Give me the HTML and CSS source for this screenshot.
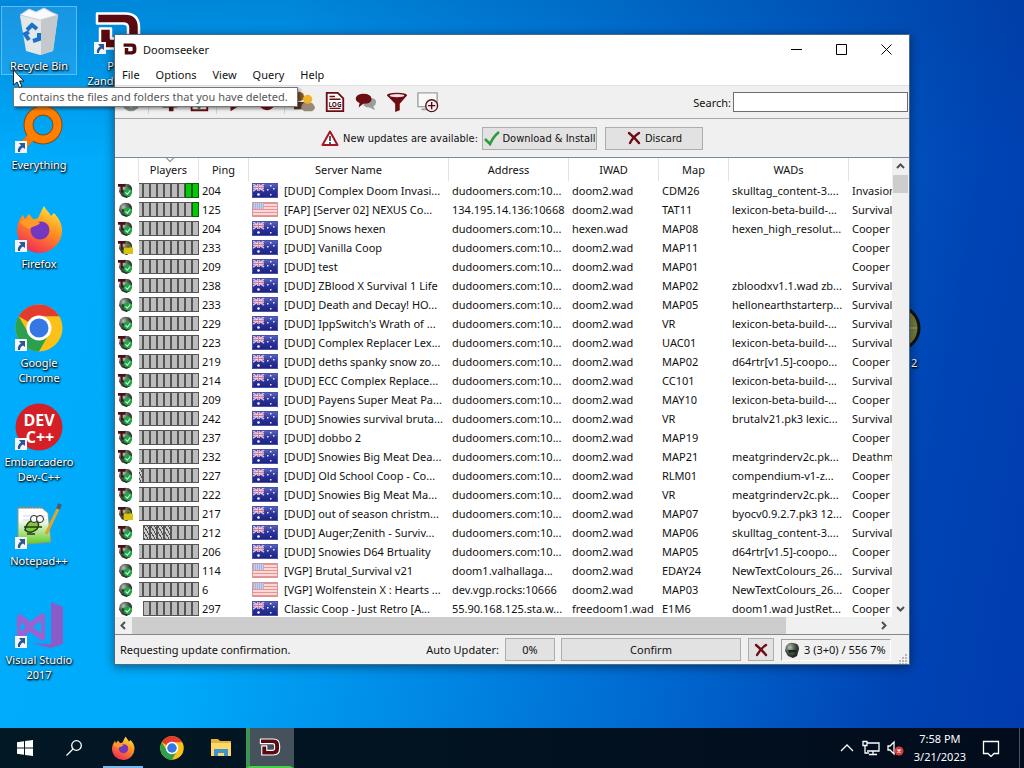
FILE: index.html
```html
<!DOCTYPE html>
<html lang="en">
<head>
    <meta charset="utf-8">
    <title>Doomseeker</title>
    <link rel="stylesheet" href="styles.css">
    <script src="servers.js" defer></script>
</head>

<body>

<!-- shared icons -->
<svg class="sprite" aria-hidden="true">
    <defs>
        <linearGradient id="fox" x1="0.8" y1="0" x2="0.3" y2="1">
            <stop offset="0" stop-color="#ffe83c"/><stop offset="0.45" stop-color="#ff9020"/><stop offset="1" stop-color="#f0285a"/>
        </linearGradient>
        <linearGradient id="note" x1="0" y1="0" x2="0" y2="1">
            <stop offset="0.3" stop-color="#fff"/><stop offset="1" stop-color="#5cc81c"/>
        </linearGradient>
        <linearGradient id="navy" x1="0" y1="0" x2="0" y2="1">
            <stop offset="0" stop-color="#5c68c0"/><stop offset="0.5" stop-color="#2c3498"/><stop offset="1" stop-color="#1c2080"/>
        </linearGradient>
        <radialGradient id="metal" cx="0.35" cy="0.3" r="0.8">
            <stop offset="0" stop-color="#b8c0b8"/><stop offset="0.45" stop-color="#4c564c"/><stop offset="1" stop-color="#101410"/>
        </radialGradient>
    </defs>
    <symbol id="d-logo" viewBox="0 0 48 41">
        <path d="M3 3H31Q45 3 45 17V24Q45 38 31 38H6V18H17V28H29Q34 28 34 24V17Q34 13 29 13H3z" fill="#5a0a10" stroke="#fff" stroke-width="2.500" stroke-linejoin="round"/>
    </symbol>
    <symbol id="d-logo-plain" viewBox="0 0 48 41">
        <path d="M2 2H31Q46 2 46 17V24Q46 39 31 39H6V17H18V28H29Q33 28 33 24V17Q33 13 29 13H2z" fill="#4c0a10"/>
    </symbol>
    <symbol id="chrome" viewBox="0 0 48 48">
        <circle cx="24" cy="24" r="23.500" fill="#fbc116"/>
        <path d="M24 24L3.600 12.300A23.500 23.500 0 0 1 44.400 12.300H24z" fill="#e33b2e"/>
        <path d="M3.600 12.300A23.500 23.500 0 0 0 24 47.500L34 30 24 24 14 30z" fill="#2da04e"/>
        <circle cx="24" cy="24" r="12.500" fill="#fff"/>
        <circle cx="24" cy="24" r="9.500" fill="#3578e5"/>
    </symbol>
    <symbol id="firefox" viewBox="0 0 48 48">
        <path d="M29 1c2 4 5 6 7 10l3-3c5 5 8 11 8 17a22.500 22.500 0 0 1-45 1C2 20 4 14 8 10l2 4 4-5 4 5c3 0 5 0 6-3 2-4 3-7 5-10z" fill="url(#fox)"/>
        <path d="M16 22c4-6 12-8 17-2 3 5 1 12-5 14-8 2-14-4-12-12z" fill="#7438c0"/>
        <path d="M5 17c6-4 12-4 16-1l4 2c-2 3-7 3-9 5-3 2-7-2-11-6z" fill="#ff9a28"/>
    </symbol>
    <symbol id="shortcut" viewBox="0 0 12 12">
        <path d="M0 0h12v12H0z" fill="#f4f6fa"/>
        <path d="M4 2h6v6L8 6.500Q5 8 5 11H3Q2 7 6 4.500z" fill="#2b5797"/>
    </symbol>
    <symbol id="helmet" viewBox="0 0 16 16">
        <path d="M2 4Q5 0 9 1q6 0 6 6l-2 7-4 2-5-2L1 9z" fill="url(#metal)"/>
        <path d="M4 8h9l-1 3-3-1-4 1z" fill="#1a261c"/>
    </symbol>
    <symbol id="ok" viewBox="0 0 16 16">
        <circle cx="10.500" cy="10" r="4.500" fill="#24a34a"/>
        <path d="M8 10l2 2 3-4" stroke="#c8ffd0" stroke-width="1.200" fill="none"/>
    </symbol>
    <symbol id="tmark" viewBox="0 0 16 16">
        <path d="M0 1h8v3H5v6H3V4H0z" fill="#4a1014"/>
    </symbol>
    <symbol id="lock" viewBox="0 0 16 16">
        <path d="M8 9V7q2.500-4 5 0v2" stroke="#8c7a10" stroke-width="1.500" fill="none"/>
        <path d="M6 8h10v7H6z" fill="#d8c410"/>
    </symbol>
    <symbol id="flag-au" viewBox="0 0 26 15">
        <path d="M0 0h26v15H0z" fill="url(#navy)"/>
        <path d="M1 1l11 7M12 1L1 8" stroke="#d8c0e4" stroke-width="1.500"/>
        <path d="M6.500 1v7M1 4.500h11" stroke="#f0d8ec" stroke-width="2.500"/>
        <path d="M6.500 1v7M1 4.500h11" stroke="#e07888" stroke-width="1"/>
        <circle cx="6.500" cy="11.500" r="1.300" fill="#fff"/>
        <path d="M18 2h1.500v1.500H18zM15 6h1.500v1.500H15zM21 5h1.500v1.500H21zM18 11h1.500v1.500H18z" fill="#e8ecff"/>
        <path d="M.5.5h25v14H.5z" fill="none" stroke="#4a52a8"/>
    </symbol>
    <symbol id="flag-us" viewBox="0 0 26 15">
        <path d="M0 0h26v15H0z" fill="#fdf0f0"/>
        <path d="M0 1.500h26M0 4.500h26M0 7.500h26M0 10.500h26M0 13.500h26" stroke="#f09090" stroke-width="1.300"/>
        <path d="M1 1h11v6H1z" fill="#a8b4e0"/>
        <path d="M2 2h9M2 4h9M2 6h9" stroke="#e4eaff" stroke-dasharray="1 1"/>
        <path d="M.5.5h25v14H.5z" fill="none" stroke="#d09898"/>
    </symbol>
    <symbol id="cross" viewBox="0 0 16 16">
        <path d="M3 3q6 5 10 10M13 3Q7 7 4 13" stroke="#6e0c14" stroke-width="2.400" fill="none" stroke-linecap="round"/>
    </symbol>
</svg>

<main class="desktop">
    <div class="icons">
        <a class="icon selected" href="#">
            <svg class="icon-pic" viewBox="0 0 48 48">
                <path d="M5 9l38-1-5 36-13 4-14-4z" fill="#e3e7ea"/>
                <path d="M26 11l17-3-5 36-12 4z" fill="#c2c8cc"/>
                <path d="M5 8l9-6 7 3 8-4 7 4 7 3-18 5z" fill="#f8fafb" stroke="#c9d0d4"/>
                <path d="M12 23l5-5 5 4M24 26v6l-6 2M14 33l-4-6 4-2" fill="none" stroke="#1a72c8" stroke-width="4"/>
            </svg>
            <span class="icon-label">Recycle Bin</span>
        </a>
        <a class="icon" href="#">
            <svg class="icon-pic" viewBox="0 0 48 48">
                <circle cx="28" cy="19" r="14.500" fill="none" stroke="#8a4b10" stroke-width="10"/>
                <path d="M17 30L4 44" stroke="#f57c00" stroke-width="8"/>
                <circle cx="28" cy="19" r="14.500" fill="none" stroke="#ff8000" stroke-width="8"/>
            </svg>
            <svg class="shortcut"><use href="#shortcut"/></svg>
            <span class="icon-label">Everything</span>
        </a>
        <a class="icon" href="#">
            <svg class="icon-pic"><use href="#firefox"/></svg>
            <svg class="shortcut"><use href="#shortcut"/></svg>
            <span class="icon-label">Firefox</span>
        </a>
        <a class="icon" href="#">
            <svg class="icon-pic"><use href="#chrome"/></svg>
            <svg class="shortcut"><use href="#shortcut"/></svg>
            <span class="icon-label">Google Chrome</span>
        </a>
        <a class="icon" href="#">
            <svg class="icon-pic" viewBox="0 0 48 48">
                <circle cx="24" cy="24" r="23.500" fill="#d51f26"/>
                <text class="dev-text" x="24" y="23" text-anchor="middle">DEV</text>
                <text class="dev-text" x="25" y="40" text-anchor="middle">C++</text>
            </svg>
            <svg class="shortcut"><use href="#shortcut"/></svg>
            <span class="icon-label">Embarcadero Dev-C++</span>
        </a>
        <a class="icon" href="#">
            <svg class="icon-pic" viewBox="0 0 48 48">
                <path d="M3 6h24l6 5 3 29-33 3z" fill="url(#note)" stroke="#8a9a80"/>
                <path d="M4 5h22" stroke="#888" stroke-width="3" stroke-dasharray="1 2"/>
                <path d="M8 14h22M8 18h24" stroke="#c8d8e8"/>
                <path d="M10 28q2-10 10-10 6 3 2 9-7 6-12 1zM9 25h18M12 32h8" fill="#7cc840" stroke="#243c10" stroke-width="1.500"/>
                <circle cx="19" cy="17" r="3.500" fill="#fff" stroke="#222"/>
                <circle cx="25" cy="17" r="3.500" fill="#fff" stroke="#222"/>
                <path d="M31 32L44 5" stroke="#e2a52c" stroke-width="3"/>
                <path d="M43 7l2-5" stroke="#50586c" stroke-width="4"/>
            </svg>
            <svg class="shortcut"><use href="#shortcut"/></svg>
            <span class="icon-label">Notepad++</span>
        </a>
        <a class="icon" href="#">
            <svg class="icon-pic" viewBox="0 0 48 48">
                <path d="M36 1l12 5v37l-12 4-20-5 20 1z" fill="#8a5cc8"/>
                <path d="M2 15l4-2 9 8 12-9 3 1v26l-3 1-12-9-9 7-4-2z" fill="#9a62d0"/>
                <path d="M6 21v10l5-5zM18 26l8 6V20z" fill="#00aefc"/>
            </svg>
            <svg class="shortcut"><use href="#shortcut"/></svg>
            <span class="icon-label">Visual Studio 2017</span>
        </a>
        <a class="icon" href="#">
            <svg class="icon-pic"><use href="#d-logo"/></svg>
            <svg class="shortcut"><use href="#shortcut"/></svg>
            <span class="icon-label">Play Zandronum</span>
        </a>
    </div>

    <a class="icon icon-right" href="#">
        <svg class="icon-pic" viewBox="0 0 48 48">
            <circle cx="24" cy="24" r="22" fill="#71793f" stroke="#101010" stroke-width="3"/>
            <path d="M24 24h20M24 4v40" stroke="#8c9058" stroke-width="2"/>
        </svg>
        <span class="icon-label">Doom 2</span>
    </a>

    <section class="window">
        <header class="titlebar">
            <svg class="title-logo"><use href="#d-logo-plain"/></svg>
            <span class="title">Doomseeker</span>
            <button class="caption" aria-label="Minimize"><svg viewBox="0 0 11 11"><path d="M0 5.500h11"/></svg></button>
            <button class="caption" aria-label="Maximize"><svg viewBox="0 0 11 11"><path d="M.5.5h10v10H.5z"/></svg></button>
            <button class="caption" aria-label="Close"><svg viewBox="0 0 11 11"><path d="M.5.5l10 10M10.500.5l-10 10"/></svg></button>
        </header>

        <nav class="menubar">
            <button>File</button>
            <button>Options</button>
            <button>View</button>
            <button>Query</button>
            <button>Help</button>
        </nav>

        <div class="toolbar">
            <button aria-label="Refresh"><svg viewBox="0 0 24 24"><circle cx="12" cy="12" r="8" fill="none" stroke="#8c9690" stroke-width="4"/></svg></button>
            <span class="sep"></span>
            <button aria-label="Buddies"><svg viewBox="0 0 24 24"><path d="M6 16h8V6h8v12h-4v4h-5v-4H6z" fill="#5a1418"/></svg></button>
            <button aria-label="Update list"><svg viewBox="0 0 24 24"><path d="M4 4h17v17H4z" fill="#fff" stroke="#6e0c14" stroke-width="2"/><path d="M8 13l4 5 5-9" fill="none" stroke="#20a84c" stroke-width="3"/></svg></button>
            <span class="sep"></span>
            <button aria-label="Join"><svg viewBox="0 0 24 24"><path d="M6 4l16 8-16 10z" fill="#6e0c14"/></svg></button>
            <button aria-label="Record"><svg viewBox="0 0 24 24"><circle cx="12" cy="12" r="9" fill="#7c0c18"/></svg></button>
            <span class="sep"></span>
            <button aria-label="Players"><svg viewBox="0 0 24 24"><circle cx="7" cy="6" r="5" fill="#8a5a20"/><path d="M1 20V12h12v8z" fill="#5a3a28"/><path d="M9 19q0-7 7-7t8 7l-3 3H12z" fill="#9a8878"/><circle cx="16" cy="9" r="5" fill="#f0b428"/></svg></button>
            <button aria-label="Log"><svg viewBox="0 0 24 24"><path d="M3 2h12l6 6v14H3z" fill="#fff" stroke="#6e0c14" stroke-width="2"/><path d="M6 6h6M6 9h12M6 19h12" stroke="#6e0c14" stroke-width="1.500"/><text class="log-text" x="12" y="17" text-anchor="middle">LOG</text></svg></button>
            <button aria-label="Chat"><svg viewBox="0 0 24 24"><path d="M11 8q12-2 12 4 0 3-3 5l2 4-6-3q-7 0-7-5z" fill="#9c9c9c"/><path d="M9 3q9 0 9 6 0 5-9 5l-5 4 1-5q-5-2-4-6 2-4 8-4z" fill="#6e0c14"/></svg></button>
            <button aria-label="Filter"><svg viewBox="0 0 24 24"><path d="M1 5q0-3 11-3t11 3l-8 9v7l-5 2v-9z" fill="#6e0c14"/><ellipse cx="12" cy="5" rx="8" ry="1.800" fill="#f0e4e4"/></svg></button>
            <button aria-label="Server details"><svg viewBox="0 0 24 24"><path d="M1 2h21v15H1z" fill="#f8f8f8" stroke="#a0a0a0" stroke-width="1.500"/><path d="M5 20h8" stroke="#a0a0a0" stroke-width="2"/><circle cx="16" cy="16" r="6.500" fill="#f4eeee" stroke="#5a1014" stroke-width="1.500"/><path d="M16 12v8M12 16h8" stroke="#401014" stroke-width="1.500"/></svg></button>
            <label class="search-label" for="search">Search:</label>
            <input id="search" class="search" type="text">
        </div>

        <div class="notice">
            <svg class="warn" viewBox="0 0 18 16"><path d="M9 1.500L16.500 15h-15z" fill="#fff" stroke="#a81420" stroke-width="2" stroke-linejoin="round"/><path d="M9 6v5M9 12v2" stroke="#222" stroke-width="1.500"/></svg>
            <span class="notice-text">New updates are available:</span>
            <button class="btn btn-install">
                <svg viewBox="0 0 16 16"><path d="M1 9l5 5Q9 7 15 2" fill="none" stroke="#2e9c3c" stroke-width="2.600"/></svg>
                Download &amp; Install
            </button>
            <button class="btn btn-discard"><svg><use href="#cross"/></svg>Discard</button>
        </div>

        <div class="list">
            <div class="list-view">
                <table class="servers">
                    <colgroup>
                        <col class="c-status"><col class="c-players"><col class="c-ping"><col class="c-name"><col class="c-address">
                        <col class="c-iwad"><col class="c-map"><col class="c-wads"><col class="c-mode">
                    </colgroup>
                    <thead>
                        <tr>
                            <th></th>
                            <th class="sorted">Players</th>
                            <th>Ping</th>
                            <th>Server Name</th>
                            <th>Address</th>
                            <th>IWAD</th>
                            <th>Map</th>
                            <th>WADs</th>
                            <th></th>
                        </tr>
                    </thead>
                    <tbody id="server-rows"></tbody>
                </table>
            </div>
            <div class="vscroll">
                <button aria-label="Scroll up"><svg viewBox="0 0 9 9"><path d="M1 6l3.500-3.500L8 6"/></svg></button>
                <div class="track"><div class="thumb"></div></div>
                <button aria-label="Scroll down"><svg viewBox="0 0 9 9"><path d="M1 3l3.500 3.500L8 3"/></svg></button>
            </div>
            <div class="hscroll">
                <button aria-label="Scroll left"><svg viewBox="0 0 9 9"><path d="M6 1L2.500 4.500 6 8"/></svg></button>
                <div class="track"><div class="thumb"></div></div>
                <button aria-label="Scroll right"><svg viewBox="0 0 9 9"><path d="M3 1l3.500 3.500L3 8"/></svg></button>
            </div>
        </div>

        <footer class="statusbar">
            <span class="status-text">Requesting update confirmation.</span>
            <span>Auto Updater:</span>
            <div class="btn progress">0%</div>
            <button class="btn btn-confirm">Confirm</button>
            <button class="btn btn-abort" aria-label="Abort"><svg><use href="#cross"/></svg></button>
            <div class="counter"><svg><use href="#helmet"/></svg>3 (3+0) / 556 7%</div>
            <svg class="grip" viewBox="0 0 10 10"><path d="M9 0v10M6 3v7M3 6v4" stroke="#b8b8b8" stroke-width="2" stroke-dasharray="2 1"/></svg>
        </footer>
    </section>

    <div class="tooltip">Contains the files and folders that you have deleted.</div>
    <svg class="cursor" viewBox="0 0 12 19"><path d="M.5 1v15l3.500-3 2.500 5.500 2.500-1L6.500 12H11z" fill="#fff" stroke="#222"/></svg>
</main>

<footer class="taskbar">
    <button class="task" aria-label="Start"><svg viewBox="0 0 16 16"><path d="M0 2.200L7 1.200V7.500H0zM8 1L16 0v7.500H8zM0 8.500h7v6.300L0 13.800zM8 8.500h8V16l-8-1z" fill="#fff"/></svg></button>
    <button class="task" aria-label="Search"><svg viewBox="0 0 16 16"><circle cx="10.500" cy="5.500" r="4.800" fill="none" stroke="#fff" stroke-width="1.300"/><path d="M7 9L.5 15.500" stroke="#fff" stroke-width="1.300"/></svg></button>
    <button class="task running" aria-label="Firefox"><svg class="big"><use href="#firefox"/></svg></button>
    <button class="task" aria-label="Chrome"><svg class="big"><use href="#chrome"/></svg></button>
    <button class="task" aria-label="File Explorer"><svg class="big" viewBox="0 0 24 24"><path d="M2 3h7l2 2h11v14H2z" fill="#e8b13a"/><path d="M2 7h20v13H2z" fill="#ffd86b"/><path d="M5 20v-7h14v7h-4v-3H9v3z" fill="#3f94cf"/></svg></button>
    <button class="task active" aria-label="Doomseeker"><svg class="mid"><use href="#d-logo"/></svg></button>
    <div class="tray">
        <svg viewBox="0 0 18 18"><path d="M3 12l6-6 6 6"/></svg>
        <svg viewBox="0 0 18 18"><path d="M5 4h12v8H5M11 12v3M7 15.500h8M1 2.500h4v4H1zM3 7v7h4"/></svg>
        <svg viewBox="0 0 18 18"><path d="M2 7h2l4-4v12l-4-4H2z"/><circle class="mute" cx="13" cy="12" r="4.500"/><path d="M11.500 10.500l3 3M14.500 10.500l-3 3"/></svg>
        <div class="clock">7:58 PM<br>3/21/2023</div>
        <svg viewBox="0 0 18 18"><path d="M1.500 2.500h15v12H12l-3 3-3-3H1.500z"/></svg>
    </div>
    <button class="peek" aria-label="Show desktop"></button>
</footer>

</body>
</html>
```
FILE: styles.css
```css
* {
    box-sizing: border-box;
}

body {
    margin: 0;
    height: 100vh;

    display: flex;
    flex-direction: column;

    font-family: "Noto Sans", "Open Sans", sans-serif;
    font-size: 11px;
    line-height: 15px;
    color: #111;
    overflow: hidden;
}

button {
    padding: 0;
    border: 0;
    background: none;
    font: inherit;
    color: inherit;
}

.sprite {
    position: absolute;
    width: 0;
    height: 0;
}

/* desktop */

.desktop {
    position: relative;
    flex: 1;
    min-height: 0;
    background:
        linear-gradient(180deg, rgba(0, 50, 140, 0.3), rgba(0, 50, 140, 0) 22%),
        linear-gradient(100deg, #00adfc 0%, #00aafa 25%, #0088e4 48%, #0064cc 70%, #0044b4 88%, #003cae 100%);
}

.icons {
    height: 100%;
    padding: 6px 0 0 1px;

    display: grid;
    grid-template-rows: repeat(7, 99px);
    grid-auto-flow: column;
    grid-auto-columns: 76px;
    justify-content: start;
    column-gap: 3px;
}

.icon {
    position: relative;
    height: 69px;

    display: flex;
    flex-direction: column;
    align-items: center;

    color: #fff;
    text-align: center;
    text-decoration: none;
    text-shadow: 1px 1px 2px #000, 0 1px 2px #000;
}

.icon.selected {
    background: rgba(120, 200, 255, 0.2);
    outline: 1px solid rgba(140, 210, 255, 0.6);
    outline-offset: -1px;
}

.icon-pic {
    width: 48px;
    height: 48px;
    margin: 1px 0 3px;
    flex: none;
}

.shortcut {
    position: absolute;
    left: 14px;
    top: 36px;
    width: 12px;
    height: 12px;
}

.icon-label {
    padding: 0 2px;
}

.icon-right {
    position: absolute;
    right: 97px;
    top: 303px;
    width: 60px;
}

.dev-text {
    font: bold 16px/16px "Open Sans", sans-serif;
    fill: #fff;
    text-shadow: none;
}

/* main window */

.window {
    position: absolute;
    top: 34px;
    right: 114px;
    bottom: 63px;
    left: 114px;

    display: flex;
    flex-direction: column;

    border: 1px solid #4a6a8a;
    background: #f0f0f0;
    box-shadow: 0 2px 10px rgba(0, 0, 0, 0.45);
}

.titlebar {
    height: 28px;
    padding-left: 8px;
    display: flex;
    align-items: center;
    background: #fff;
}

.title-logo {
    width: 14px;
    height: 12px;
}

.title {
    flex: 1;
    margin-left: 6px;
}

.caption {
    width: 45px;
}

.caption svg {
    width: 11px;
    height: 11px;
    display: block;
    margin: 0 auto;
    fill: none;
    stroke: #000;
}

.menubar {
    height: 23px;
    display: flex;
    background: #fff;
    border-bottom: 1px solid #e0e0e0;
}

.menubar button {
    padding: 0 8px;
}

.menubar button:first-child {
    padding-left: 7px;
}

.toolbar {
    height: 33px;
    padding-right: 1px;
    display: flex;
    align-items: center;
    border-bottom: 1px solid #a8a8a8;
}

.toolbar button {
    width: 31px;
    height: 24px;
}

.toolbar svg {
    width: 22px;
    height: 22px;
    display: block;
    margin: 0 auto;
}

.sep {
    width: 2px;
    height: 24px;
    margin: 0 2px;
    border-left: 1px solid #d0d0d0;
}

.log-text {
    font: bold 7px "Noto Sans", sans-serif;
    fill: #401014;
}

.search-label {
    margin: 0 2px 0 auto;
}

.search {
    width: 175px;
    height: 20px;
    border: 1px solid #6e6e6e;
    background: #fff;
    font: inherit;
}

.notice {
    height: 38px;
    display: flex;
    align-items: center;
    justify-content: center;
    font-family: "DejaVu Sans Condensed", "Noto Sans", sans-serif;
}

.warn {
    width: 18px;
    height: 16px;
}

.notice-text {
    width: 131px;
    margin: 0 8px 0 4px;
    white-space: nowrap;
}

.btn {
    height: 23px;
    display: flex;
    align-items: center;
    justify-content: center;
    gap: 3px;

    background: #e2e2e2;
    border: 1px solid #adadad;
    white-space: nowrap;
}

.btn svg {
    width: 16px;
    height: 16px;
    flex: none;
}

.btn-install {
    width: 115px;
    margin-right: 8px;
}

.btn-discard {
    width: 98px;
}

/* server list */

.list {
    flex: 1;
    min-height: 0;
    display: grid;
    grid-template: 1fr 17px / 1fr 17px;

    background: #fff;
    border-top: 1px solid #7a8a99;
    border-bottom: 1px solid #828790;
}

.list-view {
    overflow: hidden;
    min-height: 0;
    min-width: 0;
}

.servers {
    width: 834px;
    table-layout: fixed;
    border-collapse: separate;
    border-spacing: 0;
}

.c-status { width: 24px; }
.c-players { width: 60px; }
.c-ping { width: 50px; }
.c-name { width: 200px; }
.c-address { width: 120px; }
.c-iwad { width: 90px; }
.c-map { width: 70px; }
.c-wads { width: 120px; }
.c-mode { width: 100px; }

.servers th {
    position: relative;
    height: 23px;
    padding: 0;
    font-weight: normal;
    border-right: 1px solid #e2e2e2;
}

/* sort arrow above the column title */
.sorted::before {
    content: "";
    position: absolute;
    top: -3px;
    left: 28px;
    width: 5px;
    height: 5px;
    border: solid #888;
    border-width: 0 1px 1px 0;
    transform: rotate(45deg);
}

.servers td {
    height: 19px;
    padding: 0 0 0 3px;
    line-height: 19px;
    white-space: nowrap;
    overflow: hidden;
}

.servers td.slots {
    padding: 0;
}

.server-icon {
    display: block;
    width: 15px;
    height: 15px;
}

.server-name {
    display: flex;
    align-items: center;
    gap: 6px;
}

.flag {
    width: 26px;
    height: 15px;
    flex: none;
}

.slot-bar {
    height: 15px;
    display: flex;
    justify-content: flex-end;
    overflow: hidden;
}

.slot {
    width: 7px;
    flex: none;
    border: 1px solid #555;
    background: #bcbcbc;
}

.slot.human {
    background: #06c806;
    border-color: #086008;
}

.slot.spectator {
    background: repeating-linear-gradient(60deg, #555 0 1px, #ccc 1px 3px);
}

.vscroll {
    display: flex;
    flex-direction: column;
    background: #f0f0f0;
}

.hscroll {
    grid-column: 1 / 2;
    display: flex;
    background: #f0f0f0;
}

.list::after {
    content: "";
    background: #f0f0f0;
}

.list button {
    width: 17px;
    height: 17px;
    flex: none;
}

.list button svg {
    width: 9px;
    height: 9px;
    display: block;
    margin: 0 auto;
    fill: none;
    stroke: #505050;
    stroke-width: 2;
}

.track {
    flex: 1;
}

.thumb {
    background: #cdcdcd;
}

.vscroll .thumb {
    height: 18px;
    margin: 0 1px;
}

.hscroll .thumb {
    width: 88%;
    height: 17px;
}

/* status bar */

.statusbar {
    height: 29px;
    padding: 0 2px 0 5px;
    display: flex;
    align-items: center;
}

.status-text {
    flex: 1;
}

.progress {
    width: 50px;
    margin: 0 6px;
}

.btn-confirm {
    width: 180px;
}

.btn-abort {
    width: 26px;
    margin: 0 7px;
}

.counter {
    width: 110px;
    height: 22px;
    padding-left: 2px;
    display: flex;
    align-items: center;
    gap: 4px;
    border: 1px solid #b4b4b4;
    border-color: #a0a0a0 #fff #fff #a0a0a0;
    white-space: nowrap;
}

.counter svg {
    width: 16px;
    height: 16px;
}

.grip {
    width: 10px;
    height: 10px;
    margin-left: 6px;
    align-self: flex-end;
}

/* hover hint and pointer */

.tooltip {
    position: absolute;
    left: 13px;
    top: 87px;
    padding: 1px 9px 2px 5px;
    background: #fff;
    border: 1px solid #767676;
    box-shadow: 2px 2px 3px rgba(0, 0, 0, 0.4);
    color: #575757;
}

.cursor {
    position: absolute;
    left: 13px;
    top: 69px;
    width: 12px;
    height: 19px;
}

/* taskbar */

.taskbar {
    height: 40px;
    padding-left: 1px;
    display: flex;
    gap: 1px;
    background: linear-gradient(90deg, #021824, #020c1c);
    color: #fff;
}

.task {
    width: 48px;
}

.task svg {
    width: 16px;
    height: 16px;
    display: block;
    margin: 0 auto;
}

.task svg.big {
    width: 24px;
    height: 24px;
}

.task svg.mid {
    width: 22px;
    height: 20px;
}

.task.running {
    background: linear-gradient(#76b9ed, #76b9ed) center bottom / 40px 2px no-repeat;
}

.task.active {
    background: #45525c;
    border-left: 4px solid #3d9455;
    border-right: 4px solid #45525c;
    border-bottom: 2px solid #45d145;
}

.tray {
    margin-left: auto;
    padding-right: 18px;
    display: flex;
    align-items: center;
    gap: 6px;
}

.tray svg {
    width: 18px;
    height: 18px;
    fill: none;
    stroke: #fff;
    stroke-width: 1.3;
}

.tray .mute {
    fill: #d83b3b;
    stroke: none;
}

.clock {
    margin: 0 10px 0 4px;
    line-height: 18px;
    text-align: center;
}

.peek {
    width: 5px;
    border-left: 1px solid #4a5560;
}
```
FILE: servers.js
```javascript
// status: z = zandronum, o = other engine, l = locked
// slots: one letter per slot, h = human, s = spectator, . = free
const servers = [
    ["z", ".......hh", 204, "au", "[DUD] Complex Doom Invasi...", "dudoomers.com:10...", "doom2.wad", "CDM26", "skulltag_content-3....", "Invasion"],
    ["o", "........h", 125, "us", "[FAP] [Server 02] NEXUS Co...", "134.195.14.136:10668", "doom2.wad", "TAT11", "lexicon-beta-build-...", "Survival"],
    ["z", ".........", 204, "au", "[DUD] Snows hexen", "dudoomers.com:10...", "hexen.wad", "MAP08", "hexen_high_resolut...", "Cooper"],
    ["l", ".........", 233, "au", "[DUD] Vanilla Coop", "dudoomers.com:10...", "doom2.wad", "MAP11", "", "Cooper"],
    ["z", ".........", 209, "au", "[DUD] test", "dudoomers.com:10...", "doom2.wad", "MAP01", "", "Cooper"],
    ["z", ".........", 238, "au", "[DUD] ZBlood X Survival 1 Life", "dudoomers.com:10...", "doom2.wad", "MAP02", "zbloodxv1.1.wad zb...", "Survival"],
    ["o", ".........", 233, "au", "[DUD] Death and Decay! HO...", "dudoomers.com:10...", "doom2.wad", "MAP05", "hellonearthstarterp...", "Survival"],
    ["o", ".........", 229, "au", "[DUD] IppSwitch's Wrath of ...", "dudoomers.com:10...", "doom2.wad", "VR", "lexicon-beta-build-...", "Survival"],
    ["z", ".........", 223, "au", "[DUD] Complex Replacer Lex...", "dudoomers.com:10...", "doom2.wad", "UAC01", "lexicon-beta-build-...", "Survival"],
    ["z", ".........", 219, "au", "[DUD] deths spanky snow zo...", "dudoomers.com:10...", "doom2.wad", "MAP02", "d64rtr[v1.5]-coopo...", "Cooper"],
    ["z", ".........", 214, "au", "[DUD] ECC Complex Replace...", "dudoomers.com:10...", "doom2.wad", "CC101", "lexicon-beta-build-...", "Survival"],
    ["z", ".........", 209, "au", "[DUD] Payens Super Meat Pa...", "dudoomers.com:10...", "doom2.wad", "MAY10", "lexicon-beta-build-...", "Cooper"],
    ["z", ".........", 242, "au", "[DUD] Snowies survival bruta...", "dudoomers.com:10...", "doom2.wad", "VR", "brutalv21.pk3 lexic...", "Survival"],
    ["z", ".........", 237, "au", "[DUD] dobbo 2", "dudoomers.com:10...", "doom2.wad", "MAP19", "", "Cooper"],
    ["z", ".........", 232, "au", "[DUD] Snowies Big Meat Dea...", "dudoomers.com:10...", "doom2.wad", "MAP21", "meatgrinderv2c.pk...", "Deathm"],
    ["z", "s........", 227, "au", "[DUD] Old School Coop - Co...", "dudoomers.com:10...", "doom2.wad", "RLM01", "compendium-v1-z...", "Cooper"],
    ["z", ".........", 222, "au", "[DUD] Snowies Big Meat Ma...", "dudoomers.com:10...", "doom2.wad", "VR", "meatgrinderv2c.pk...", "Cooper"],
    ["l", ".........", 217, "au", "[DUD] out of season christm...", "dudoomers.com:10...", "doom2.wad", "MAP07", "byocv0.9.2.7.pk3 12...", "Cooper"],
    ["z", "ssss....", 212, "au", "[DUD] Auger;Zenith - Surviv...", "dudoomers.com:10...", "doom2.wad", "MAP06", "skulltag_content-3....", "Survival"],
    ["z", ".........", 206, "au", "[DUD] Snowies D64 Brtuality", "dudoomers.com:10...", "doom2.wad", "MAP05", "d64rtr[v1.5]-coopo...", "Cooper"],
    ["o", ".........", 114, "us", "[VGP] Brutal_Survival v21", "doom1.valhallaga...", "doom2.wad", "EDAY24", "NewTextColours_26...", "Survival"],
    ["o", ".........", 6, "us", "[VGP] Wolfenstein X : Hearts ...", "dev.vgp.rocks:10666", "doom2.wad", "MAP03", "NewTextColours_26...", "Cooper"],
    ["o", "........", 297, "au", "Classic Coop - Just Retro [A...", "55.90.168.125.sta.w...", "freedoom1.wad", "E1M6", "doom1.wad JustRet...", "Cooper"],
];

const layers = {
    z: ["helmet", "tmark", "ok"],
    o: ["helmet", "ok"],
    l: ["helmet", "tmark", "lock"],
};
const slotClass = { h: "slot human", s: "slot spectator", ".": "slot" };

document.getElementById("server-rows").innerHTML = servers.map(function (s) {
    const [status, slots, ping, country, name, ...rest] = s;
    const icon = layers[status].map(id => `<use href="#${id}"/>`).join("");
    const bar = [...slots].map(c => `<span class="${slotClass[c]}"></span>`).join("");

    return `<tr>
        <td><svg class="server-icon" viewBox="0 0 16 16">${icon}</svg></td>
        <td class="slots"><div class="slot-bar">${bar}</div></td>
        <td>${ping}</td>
        <td><div class="server-name"><svg class="flag"><use href="#flag-${country}"/></svg>${name}</div></td>
        ${rest.map(text => `<td>${text}</td>`).join("")}
    </tr>`;
}).join("");
```
